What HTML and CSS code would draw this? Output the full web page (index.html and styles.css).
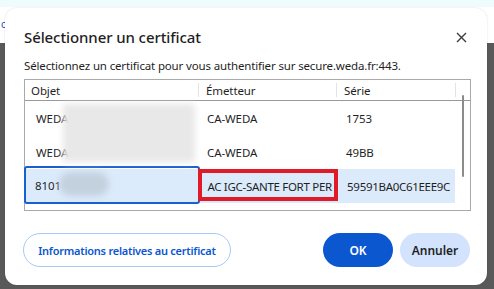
FILE: index.html
```html
<!DOCTYPE html>
<html lang="fr">
<head>
    <meta charset="UTF-8">
    <title>Sélectionner un certificat</title>
    <link rel="stylesheet" href="styles.css">
</head>
<body>
    <div class="page-bg">
        <span class="page-letter">c</span>
    </div>

    <div class="dialog">
        <div class="dialog-head">
            <h1>Sélectionner un certificat</h1>
            <button class="close-btn" aria-label="Fermer">
                <svg width="11" height="11" viewBox="0 0 11 11">
                    <path d="M1 1 L10 10 M10 1 L1 10" stroke="#3c3c3c" stroke-width="1.4" fill="none"/>
                </svg>
            </button>
        </div>
        <p class="intro">Sélectionnez un certificat pour vous authentifier sur secure.weda.fr:443.</p>

        <div class="cert-list">
            <div class="row head">
                <div class="cell c1">Objet</div>
                <div class="cell c2">Émetteur</div>
                <div class="cell c3">Série</div>
                <div class="cell c4"></div>
            </div>
            <div class="row">
                <div class="cell c1">WEDA</div>
                <div class="cell c2">CA-WEDA</div>
                <div class="cell c3">1753</div>
            </div>
            <div class="row">
                <div class="cell c1">WEDA</div>
                <div class="cell c2">CA-WEDA</div>
                <div class="cell c3">49BB</div>
            </div>
            <div class="row selected">
                <div class="cell c1 focus">8101</div>
                <div class="cell c2">AC IGC-SANTE FORT PER</div>
                <div class="cell c3">59591BA0C61EEE9C</div>
            </div>

            <div class="blur blur-top"></div>
            <div class="blur blur-sel"></div>
            <div class="mark"></div>
            <div class="scrollbar"></div>
        </div>

        <div class="actions">
            <button class="btn outline">Informations relatives au certificat</button>
            <div class="right">
                <button class="btn primary">OK</button>
                <button class="btn tonal">Annuler</button>
            </div>
        </div>
    </div>
</body>
</html>
```

FILE: styles.css
```css
body {
    margin: 0;
    height: 289px;
    overflow: hidden;
    font-family: "Noto Sans", "Open Sans", Arial, sans-serif;
    color: #1f1f1f;
    background: linear-gradient(#eefcfd 0, #eefcfd 7px, #ffffff 7px, #ffffff 43px, #595959 43px);
    position: relative;
}
.page-bg {
    height: 0;
}
.page-letter {
    position: absolute;
    left: 1px;
    top: 17px;
    font-size: 10px;
    color: #2a4fb5;
}
.dialog {
    position: absolute;
    left: 5px;
    top: 8px;
    width: 482px;
    height: 277px;
    box-sizing: border-box;
    background: #ffffff;
    border-radius: 12px;
    padding: 17px 16px 0 19px;
    box-shadow: 0 0 2px rgba(0,0,0,0.15);
}
.dialog-head {
    display: flex;
    justify-content: space-between;
    align-items: center;
    height: 24px;
}
h1 {
    margin: 0;
    font-size: 15px;
    font-weight: 500;
    letter-spacing: -0.1px;
}
.close-btn {
    border: none;
    background: none;
    padding: 0;
    margin-right: 4px;
    display: flex;
}
.intro {
    margin: 9px 0 0;
    font-size: 11.5px;
    letter-spacing: -0.15px;
}
.cert-list {
    position: relative;
    margin-top: 6px;
    width: 447px;
    height: 132px;
    box-sizing: border-box;
    border: 1px solid #a9a9a9;
    font-size: 11.5px;
    letter-spacing: -0.1px;
}
.row {
    display: flex;
    height: 34px;
    align-items: center;
    width: 430px;
}
.row.head {
    height: 20px;
    width: 445px;
    border-bottom: 1px solid #9a9a9a;
}
.cell {
    box-sizing: border-box;
    white-space: nowrap;
    overflow: hidden;
    height: 100%;
    display: flex;
    align-items: center;
}
.c1 { width: 173px; padding-left: 11px; }
.c2 { width: 138px; padding-left: 9px; }
.c3 { width: 119px; padding-left: 10px; }
.c4 { flex: 1; }
.head .c1 { padding-left: 6px; }
.head .c2, .head .c3, .head .c4 {
    border-left: 1px solid #e3e3e3;
    padding-left: 7px;
}
.head .c2, .head .c3 { height: 14px; }
.head .c4 { height: 14px; }
.row.selected {
    background: #dcebfb;
}
.focus {
    border: 2px solid #1a5fd0;
    border-radius: 3px;
    margin-top: -2px;
    height: 38px;
    width: 178px;
    padding-left: 9px;
    margin-left: -1px;
}
.selected .c2 { padding-left: 7px; letter-spacing: -0.3px; }
.selected .c3 { letter-spacing: -0.3px; }
.blur {
    position: absolute;
    filter: blur(3px);
}
.blur-top {
    left: 38px;
    top: 24px;
    width: 132px;
    height: 58px;
    background: #e8e8e8;
}
.blur-sel {
    left: 34px;
    top: 92px;
    width: 50px;
    height: 24px;
    background: #c3d1df;
    border-radius: 12px;
}
.mark {
    position: absolute;
    left: 173px;
    top: 89px;
    width: 140px;
    height: 32px;
    box-sizing: border-box;
    border: 4px solid #e11a27;
}
.scrollbar {
    position: absolute;
    left: 437px;
    top: 15px;
    width: 2px;
    height: 82px;
    background: #8b8b8b;
    border-radius: 1px;
}
.actions {
    display: flex;
    justify-content: space-between;
    margin-top: 22px;
    padding-right: 1px;
}
.right {
    display: flex;
    gap: 7px;
}
.btn {
    height: 34px;
    border-radius: 17px;
    font-family: inherit;
    font-size: 12px;
    font-weight: 600;
    cursor: pointer;
    border: none;
    white-space: nowrap;
}
.outline {
    background: #ffffff;
    border: 1px solid #a8c7fa;
    color: #0b57d0;
    padding: 0;
    width: 208px;
    margin-left: -1px;
    font-weight: 600;
    font-size: 11px;
    letter-spacing: -0.25px;
}
.primary {
    background: #0b57d0;
    color: #ffffff;
    width: 70px;
}
.tonal {
    background: #d3e3fd;
    color: #1f1f1f;
    width: 70px;
}
```
